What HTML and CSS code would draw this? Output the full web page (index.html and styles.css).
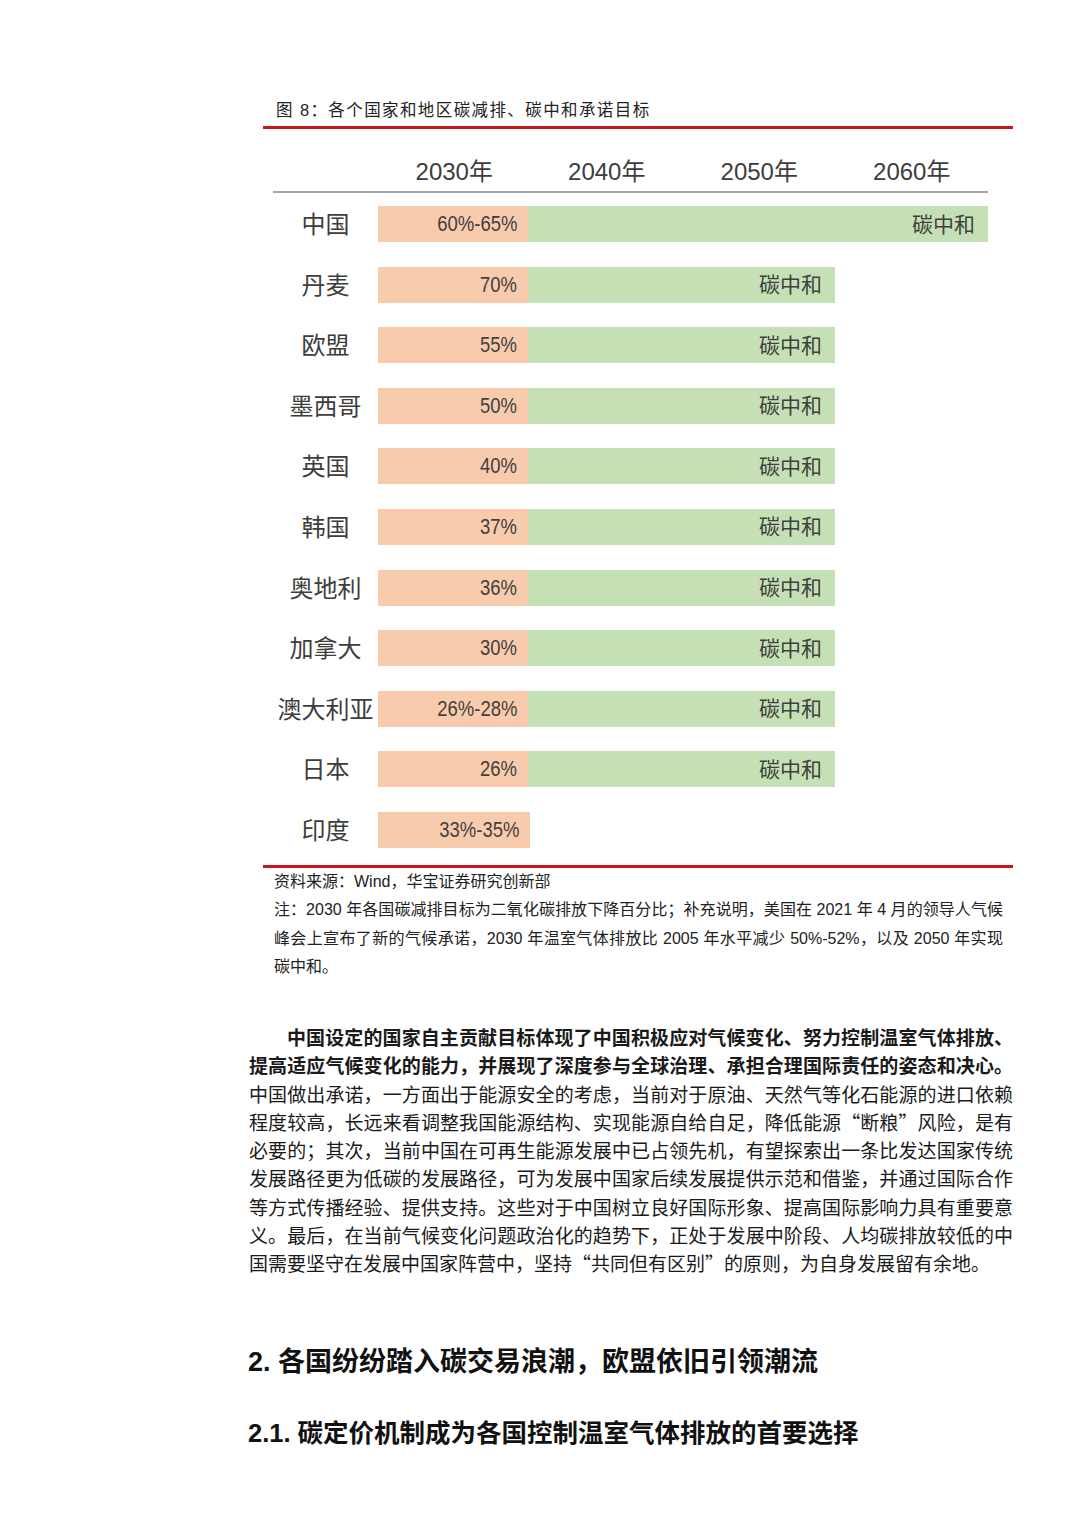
FILE: index.html
```html
<!DOCTYPE html>
<html lang="zh-CN">
<head>
<meta charset="utf-8">
<title>各个国家和地区碳减排、碳中和承诺目标</title>
<link rel="stylesheet" href="styles.css">
</head>
<body>
<div class="page">
  <div class="figure">
    <div class="fig-title">图 8：各个国家和地区碳减排、碳中和承诺目标</div>
    <div class="chart-wrap">
      <div class="chart-head">
        <span></span><span>2030年</span><span>2040年</span><span>2050年</span><span>2060年</span>
      </div>
      <div class="rows">
        <div class="row"><span class="name">中国</span><div class="track"><span class="seg seg-a"><span class="v">60%-65%</span></span><span class="seg seg-b to2060">碳中和</span></div></div>
        <div class="row"><span class="name">丹麦</span><div class="track"><span class="seg seg-a"><span class="v">70%</span></span><span class="seg seg-b to2050">碳中和</span></div></div>
        <div class="row"><span class="name">欧盟</span><div class="track"><span class="seg seg-a"><span class="v">55%</span></span><span class="seg seg-b to2050">碳中和</span></div></div>
        <div class="row"><span class="name">墨西哥</span><div class="track"><span class="seg seg-a"><span class="v">50%</span></span><span class="seg seg-b to2050">碳中和</span></div></div>
        <div class="row"><span class="name">英国</span><div class="track"><span class="seg seg-a"><span class="v">40%</span></span><span class="seg seg-b to2050">碳中和</span></div></div>
        <div class="row"><span class="name">韩国</span><div class="track"><span class="seg seg-a"><span class="v">37%</span></span><span class="seg seg-b to2050">碳中和</span></div></div>
        <div class="row"><span class="name">奥地利</span><div class="track"><span class="seg seg-a"><span class="v">36%</span></span><span class="seg seg-b to2050">碳中和</span></div></div>
        <div class="row"><span class="name">加拿大</span><div class="track"><span class="seg seg-a"><span class="v">30%</span></span><span class="seg seg-b to2050">碳中和</span></div></div>
        <div class="row"><span class="name">澳大利亚</span><div class="track"><span class="seg seg-a"><span class="v">26%-28%</span></span><span class="seg seg-b to2050">碳中和</span></div></div>
        <div class="row"><span class="name">日本</span><div class="track"><span class="seg seg-a"><span class="v">26%</span></span><span class="seg seg-b to2050">碳中和</span></div></div>
        <div class="row"><span class="name">印度</span><div class="track"><span class="seg seg-a wide"><span class="v">33%-35%</span></span></div></div>
      </div>
    </div>
    <div class="fig-notes">
      <p>资料来源：Wind，华宝证券研究创新部</p>
      <p class="note">
        <span class="ln">注：2030 年各国碳减排目标为二氧化碳排放下降百分比；补充说明，美国在 2021 年 4 月的领导人气候</span>
        <span class="ln">峰会上宣布了新的气候承诺，2030 年温室气体排放比 2005 年水平减少 50%-52%，以及 2050 年实现</span>
        <span class="ln last">碳中和。</span>
      </p>
    </div>
  </div>

  <p class="body-text"><strong>中国设定的国家自主贡献目标体现了中国积极应对气候变化、努力控制温室气体排放、提高适应气候变化的能力，并展现了深度参与全球治理、承担合理国际责任的姿态和决心。</strong>中国做出承诺，一方面出于能源安全的考虑，当前对于原油、天然气等化石能源的进口依赖程度较高，长远来看调整我国能源结构、实现能源自给自足，降低能源“断粮”风险，是有必要的；其次，当前中国在可再生能源发展中已占领先机，有望探索出一条比发达国家传统发展路径更为低碳的发展路径，可为发展中国家后续发展提供示范和借鉴，并通过国际合作等方式传播经验、提供支持。这些对于中国树立良好国际形象、提高国际影响力具有重要意义。最后，在当前气候变化问题政治化的趋势下，正处于发展中阶段、人均碳排放较低的中国需要坚守在发展中国家阵营中，坚持“共同但有区别”的原则，为自身发展留有余地。</p>

  <h2 class="h-sec">2. 各国纷纷踏入碳交易浪潮，欧盟依旧引领潮流</h2>
  <h3 class="h-sub">2.1. 碳定价机制成为各国控制温室气体排放的首要选择</h3>
</div>
</body>
</html>
```

FILE: styles.css
```css
html, body {
  margin: 0;
  padding: 0;
  background: #ffffff;
}

body {
  font-family: "Liberation Sans", "Noto Sans CJK SC", sans-serif;
  color: #1a1a1a;
}

.page {
  padding: 98px 0 40px 248px;
  width: 780px;
}

.figure {
  margin-left: 15px;
  width: 750px;
}

.fig-title {
  font-size: 16.5px;
  line-height: 24px;
  letter-spacing: 1.4px;
  padding: 0 0 4px 13px;
  border-bottom: 3px solid #c8161d;
  color: #222;
}

.chart-wrap {
  padding: 28px 25px 17px 10px;
  border-bottom: 3px solid #c8161d;
  color: #3d3d3d;
}

.chart-head {
  display: grid;
  grid-template-columns: 105px repeat(4, 1fr);
  font-size: 24px;
  line-height: 30px;
  padding-bottom: 4px;
  border-bottom: 2px solid #a6a6a6;
  text-align: center;
}

.rows {
  display: grid;
  row-gap: 24.6px;
  padding-top: 13px;
}

.row {
  display: grid;
  grid-template-columns: 105px 1fr;
  grid-template-rows: 36px;
  height: 36px;
}

.name {
  font-family: "Noto Sans CJK SC", sans-serif;
  font-size: 24px;
  text-align: center;
  line-height: 33px;
  padding-bottom: 3px;
}

.track {
  display: flex;
  height: 36px;
}

.seg {
  display: flex;
  align-items: center;
  justify-content: flex-end;
  height: 36px;
  box-sizing: border-box;
}

.seg-a {
  width: 150px;
  background: #f8cbad;
  padding-right: 11px;
  font-family: "Liberation Sans", sans-serif;
  font-size: 22px;
  color: #404040;
}

.seg-a .v {
  display: inline-block;
  transform: scaleX(0.84);
  transform-origin: right center;
  white-space: nowrap;
}

.seg-a.wide {
  width: 152px;
}

.seg-b {
  background: #c5e0b4;
  padding: 0 13px 3px 0;
  font-family: "Noto Sans CJK SC", sans-serif;
  font-size: 21px;
  color: #404040;
}

.seg-b.to2060 {
  width: 460px;
}

.seg-b.to2050 {
  width: 307px;
}

.fig-notes {
  padding: 0 10px 0 11px;
  font-size: 16px;
  line-height: 28.5px;
  color: #222;
}

.fig-notes p {
  margin: 0;
}

.note .ln {
  display: block;
  text-align: justify;
  text-align-last: justify;
  white-space: nowrap;
}

.note .ln.last {
  text-align-last: auto;
}

.body-text {
  margin: 41px 0 0 1px;
  width: 764px;
  font-family: "Noto Sans CJK SC", sans-serif;
  font-size: 19px;
  line-height: 28.3px;
  text-indent: 2em;
  text-align: justify;
  color: #1a1a1a;
}

.body-text strong {
  font-weight: 700;
}

.h-sec {
  margin: 66px 0 0 0;
  font-size: 27px;
  line-height: 36px;
  font-weight: 700;
  color: #111;
}

.h-sub {
  margin: 35px 0 0 0;
  font-size: 25.5px;
  line-height: 36px;
  font-weight: 700;
  color: #111;
}
```
